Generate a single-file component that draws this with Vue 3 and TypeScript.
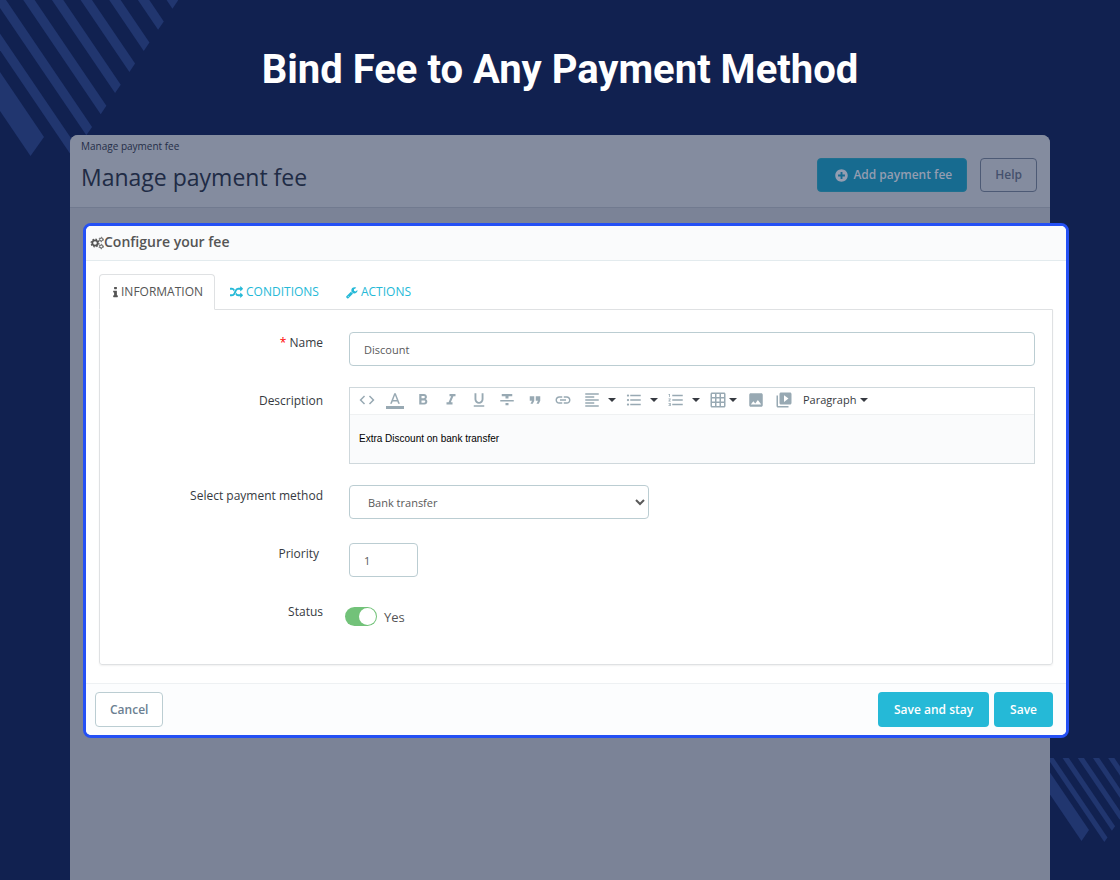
<script setup lang="ts">
import { ref } from 'vue'

interface Tool {
  name: string
  path: string
  menu?: boolean
  tight?: boolean
}

interface Tab {
  id: string
  label: string
  path: string
  box: string
  width: number
}

const tools: Tool[] = [
  { name: 'Source code', path: 'M9.4 16.6L4.8 12l4.6-4.6L8 6l-6 6 6 6 1.4-1.4zm5.2 0l4.6-4.6-4.6-4.6L16 6l6 6-6 6-1.4-1.4z' },
  { name: 'Text color', path: 'M0 20h24v4H0zM11 3L5.5 17h2.25l1.12-3h6.25l1.12 3h2.25L13 3h-2zm-1.38 9L12 5.67 14.38 12H9.62z' },
  { name: 'Bold', path: 'M15.6 10.79c.97-.67 1.65-1.77 1.65-2.79 0-2.26-1.75-4-4-4H7v14h7.04c2.09 0 3.71-1.7 3.71-3.79 0-1.52-.86-2.82-2.15-3.42zM10 6.5h3c.83 0 1.5.67 1.5 1.5s-.67 1.5-1.5 1.5h-3v-3zm3.5 9H10v-3h3.5c.83 0 1.5.67 1.5 1.5s-.67 1.5-1.5 1.5z' },
  { name: 'Italic', path: 'M10 4v3h2.21l-3.42 8H6v3h8v-3h-2.21l3.42-8H18V4z' },
  { name: 'Underline', path: 'M12 17c3.31 0 6-2.69 6-6V3h-2.5v8c0 1.93-1.57 3.5-3.5 3.5S8.5 12.93 8.5 11V3H6v8c0 3.31 2.69 6 6 6zm-7 2v2h14v-2H5z' },
  { name: 'Strikethrough', path: 'M10 19h4v-3h-4v3zM5 4v3h5v3h4V7h5V4H5zM3 14h18v-2H3v2z' },
  { name: 'Blockquote', path: 'M6 17h3l2-4V7H5v6h3zm8 0h3l2-4V7h-6v6h3z' },
  { name: 'Link', path: 'M3.9 12c0-1.71 1.39-3.1 3.1-3.1h4V7H7c-2.76 0-5 2.24-5 5s2.24 5 5 5h4v-1.9H7c-1.71 0-3.1-1.39-3.1-3.1zM8 13h8v-2H8v2zm9-6h-4v1.9h4c1.71 0 3.1 1.39 3.1 3.1s-1.39 3.1-3.1 3.1h-4V17h4c2.76 0 5-2.24 5-5s-2.24-5-5-5z' },
  { name: 'Align', menu: true, path: 'M15 15H3v2h12v-2zm0-8H3v2h12V7zM3 13h18v-2H3v2zm0 8h18v-2H3v2zM3 3v2h18V3H3z' },
  { name: 'Bullet list', menu: true, path: 'M4 10.5c-.83 0-1.5.67-1.5 1.5s.67 1.5 1.5 1.5 1.5-.67 1.5-1.5-.67-1.5-1.5-1.5zm0-6c-.83 0-1.5.67-1.5 1.5S3.17 7.5 4 7.5 5.5 6.83 5.5 6 4.83 4.5 4 4.5zm0 12c-.83 0-1.5.68-1.5 1.5s.68 1.5 1.5 1.5 1.5-.68 1.5-1.5-.67-1.5-1.5-1.5zM7 19h14v-2H7v2zm0-6h14v-2H7v2zm0-8v2h14V5H7z' },
  { name: 'Numbered list', menu: true, path: 'M2 17h2v.5H3v1h1v.5H2v1h3v-4H2v1zm1-9h1V4H2v1h1v3zm-1 3h1.8L2 13.1v.9h3v-1H3.2L5 10.9V10H2v1zm5-6v2h14V5H7zm0 14h14v-2H7v2zm0-6h14v-2H7v2z' },
  { name: 'Table', menu: true, tight: true, path: 'M20 2H4c-1.1 0-2 .9-2 2v16c0 1.1.9 2 2 2h16c1.1 0 2-.9 2-2V4c0-1.1-.9-2-2-2zM8 20H4v-4h4v4zm0-6H4v-4h4v4zm0-6H4V4h4v4zm6 12h-4v-4h4v4zm0-6h-4v-4h4v4zm0-6h-4V4h4v4zm6 12h-4v-4h4v4zm0-6h-4v-4h4v4zm0-6h-4V4h4v4z' },
  { name: 'Image', path: 'M21 19V5c0-1.1-.9-2-2-2H5c-1.1 0-2 .9-2 2v14c0 1.1.9 2 2 2h14c1.1 0 2-.9 2-2zM8.5 13.5l2.5 3.01L14.5 12l4.5 6H5l3.5-4.5z' },
  { name: 'Video', path: 'M4 6H2v14c0 1.1.9 2 2 2h14v-2H4V6zm16-4H8c-1.1 0-2 .9-2 2v12c0 1.1.9 2 2 2h12c1.1 0 2-.9 2-2V4c0-1.1-.9-2-2-2zm-8 12.5v-9l6 4.5-6 4.5z' },
]

const tabs: Tab[] = [
  {
    id: 'information', label: 'INFORMATION', box: '576 0 640 1792', width: 5,
    path: 'M1216 1344v128q0 26-19 45t-45 19h-512q-26 0-45-19t-19-45v-128q0-26 19-45t45-19h64v-384h-64q-26 0-45-19t-19-45v-128q0-26 19-45t45-19h384q26 0 45 19t19 45v576h64q26 0 45 19t19 45zm-128-1152v192q0 26-19 45t-45 19h-256q-26 0-45-19t-19-45v-192q0-26 19-45t45-19h256q26 0 45 19t19 45z',
  },
  {
    id: 'conditions', label: 'CONDITIONS', box: '0 0 1792 1792', width: 13,
    path: 'M666 481q-60 92-137 273-22-45-37-72.5t-40.5-63.5-51-56.5-63-35-81.5-14.5h-224q-14 0-23-9t-9-23v-192q0-14 9-23t23-9h224q250 0 410 225zm1126 799q0 14-9 23l-320 320q-9 9-23 9-13 0-22.5-9.5t-9.5-22.5v-192q-32 0-85 .5t-81 1-73-1-71-5-64-10.5-63-18.5-58-28.5-59-40-55-53.5-56-69.5q59-93 136-273 22 45 37 72.5t40.5 63.5 51 56.5 63 35 81.5 14.5h256v-192q0-14 9-23t23-9q12 0 24 10l319 319q9 9 9 23zm0-896q0 14-9 23l-320 320q-9 9-23 9-13 0-22.5-9.5t-9.5-22.5v-192h-256q-48 0-87 15t-69 45-51 61.5-45 77.5q-32 62-78 171-29 66-49.5 111t-54 105-64 100-74 83-90 68.5-106.5 42-128 16.5h-224q-14 0-23-9t-9-23v-192q0-14 9-23t23-9h224q48 0 87-15t69-45 51-61.5 45-77.5q32-62 78-171 29-66 49.5-111t54-105 64-100 74-83 90-68.5 106.5-42 128-16.5h256v-192q0-14 9-23t23-9q12 0 24 10l319 319q9 9 9 23z',
  },
  {
    id: 'actions', label: 'ACTIONS', box: '64 0 1728 1792', width: 12,
    path: 'M448 1472q0-26-19-45t-45-19-45 19-19 45 19 45 45 19 45-19 19-45zm644-420l-682 682q-37 37-90 37-52 0-91-37l-106-108q-38-36-38-90 0-53 38-91l681-681q39 98 114.5 173.5t173.5 114.500zm634-435q0 39-23 106-47 134-164.500 217.500t-258.500 83.500q-185 0-316.500-131.500t-131.500-316.500 131.500-316.500 316.500-131.500q58 0 121.500 16.500t107.500 46.500q16 11 16 28t-16 28l-293 169v224l193 107q5-3 79-48.500t135.500-81 70.500-35.500q15 0 23.500 10t8.500 25z',
  },
]

const activeTab = ref('information')
const name = ref('Discount')
const description = ref('Extra Discount on bank transfer')
const method = ref('Bank transfer')
const priority = ref('1')
const enabled = ref(true)

// Diagonal bars running up and to the left from their pointed ends.
function bar(tipX: number, tipY: number, endX: number, endY: number): string {
  const run = 200
  const rise = 295
  return `${tipX},${tipY} ${endX},${endY} ${endX - run},${endY - rise} ${tipX - run},${tipY - rise}`
}

const topBars: string[] = [
  bar(44, 137, 30.5, 156),
  ...Array.from({ length: 8 }, (_, i) => bar(77.7 + 14.35 * i, 148 - 21.1 * i, 72 + 14.35 * i, 156.4 - 21.1 * i)),
]
const bottomBars: string[] = [
  bar(39, 72, 31.5, 83),
  ...Array.from({ length: 5 }, (_, i) => bar(57.5 + 7.6 * i, 79.5 - 11.2 * i, 54.3 + 7.6 * i, 84 - 11.2 * i)),
]
</script>

<template>
  <main class="page">
    <svg class="bars bars-top" width="190" height="170" viewBox="0 0 190 170" aria-hidden="true">
      <polygon v-for="points in topBars" :key="points" :points="points" />
    </svg>
    <svg class="bars bars-bottom" width="70" height="122" viewBox="0 0 70 122" aria-hidden="true">
      <polygon v-for="points in bottomBars" :key="points" :points="points" />
    </svg>

    <h1 class="headline">Bind Fee to Any Payment Method</h1>

    <section class="admin">
      <header class="admin-head">
        <div>
          <p class="crumb">Manage payment fee</p>
          <h2 class="admin-title">Manage payment fee</h2>
        </div>
        <div class="admin-actions">
          <button type="button" class="btn btn-add">
            <svg width="15" height="15" viewBox="0 0 24 24" aria-hidden="true">
              <path d="M12 2C6.480 2 2 6.480 2 12s4.480 10 10 10 10-4.480 10-10S17.520 2 12 2zm5.500 11.500h-4v4h-3v-4h-4v-3h4v-4h3v4h4v3z" />
            </svg>
            Add payment fee
          </button>
          <button type="button" class="btn btn-help">Help</button>
        </div>
      </header>

      <form class="dialog" @submit.prevent>
        <header class="dialog-head">
          <svg class="cogs" width="14" height="14" viewBox="0 0 14 14" aria-hidden="true">
            <circle cx="5" cy="7" r="2.700" stroke-width="1.800" />
            <circle cx="5" cy="7" r="3.900" stroke-width="1.200" stroke-dasharray="1.600 1.463" />
            <circle cx="11.200" cy="3.500" r="1.500" stroke-width="1" />
            <circle cx="11.200" cy="3.500" r="2.200" stroke-width=".900" stroke-dasharray="1.200 1.104" />
            <circle cx="11.200" cy="10.500" r="1.500" stroke-width="1" />
            <circle cx="11.200" cy="10.500" r="2.200" stroke-width=".900" stroke-dasharray="1.200 1.104" />
          </svg>
          <h3 class="dialog-title">Configure your fee</h3>
        </header>

        <div class="dialog-body">
          <div class="tabs" role="tablist">
            <button
              v-for="tab in tabs"
              :key="tab.id"
              type="button"
              role="tab"
              class="tab"
              :class="{ active: tab.id === activeTab }"
              :aria-selected="tab.id === activeTab"
              @click="activeTab = tab.id"
            >
              <svg :width="tab.width" height="13" :viewBox="tab.box" aria-hidden="true"><path :d="tab.path" /></svg>
              {{ tab.label }}
            </button>
          </div>

          <div class="pane" role="tabpanel">
            <div class="row">
              <label class="label" for="fee-name"><span class="required">*</span> Name</label>
              <input id="fee-name" v-model="name" class="field" type="text">
            </div>

            <div class="row">
              <label class="label lowered" for="fee-description">Description</label>
              <div class="editor">
                <div class="toolbar">
                  <button
                    v-for="tool in tools"
                    :key="tool.name"
                    type="button"
                    class="tool"
                    :class="{ menu: tool.menu, tight: tool.tight }"
                    :aria-label="tool.name"
                  >
                    <svg width="18" height="18" viewBox="0 0 24 24" aria-hidden="true"><path :d="tool.path" /></svg>
                    <span v-if="tool.menu" class="caret"></span>
                  </button>
                  <button type="button" class="tool format">Paragraph <span class="caret"></span></button>
                </div>
                <textarea id="fee-description" v-model="description" class="editor-text" rows="1"></textarea>
              </div>
            </div>

            <div class="row">
              <label class="label" for="fee-method">Select payment method</label>
              <select id="fee-method" v-model="method" class="field select">
                <option>Bank transfer</option>
              </select>
            </div>

            <div class="row spaced">
              <label class="label inset" for="fee-priority">Priority</label>
              <input id="fee-priority" v-model="priority" class="field short" type="text">
            </div>

            <div class="row spaced">
              <label class="label" for="fee-status">Status</label>
              <div class="status">
                <input id="fee-status" v-model="enabled" class="switch" type="checkbox">
                <span>{{ enabled ? 'Yes' : 'No' }}</span>
              </div>
            </div>
          </div>
        </div>

        <footer class="dialog-foot">
          <button type="button" class="btn btn-cancel">Cancel</button>
          <div class="saves">
            <button type="submit" class="btn btn-save">Save and stay</button>
            <button type="submit" class="btn btn-save">Save</button>
          </div>
        </footer>
      </form>
    </section>
  </main>
</template>

<style>
body {
  margin: 0;
  background: #112150;
}
</style>

<style scoped>
.page {
  position: relative;
  display: flex;
  flex-direction: column;
  box-sizing: border-box;
  min-height: 100vh;
  overflow: hidden;
  background: #112150;
  font-family: "Open Sans", sans-serif;
  font-size: 12px;
  color: #363a41;
}

.bars {
  position: absolute;
  fill: #21366f;
}

.bars-top {
  top: 0;
  left: 0;
}

.bars-bottom {
  right: 0;
  bottom: 0;
}

.headline {
  position: relative;
  margin: 0;
  padding: 46px 0 41px;
  text-align: center;
  font: 700 40px/48px Roboto, sans-serif;
  color: #fff;
}

.admin {
  position: relative;
  flex: 1;
  margin: 0 70px;
  border-radius: 8px 8px 0 0;
  background: #7b8397;
}

.admin-head {
  display: flex;
  justify-content: space-between;
  padding: 3px 13px 14px 11px;
  border-bottom: 1px solid #717a8f;
  border-radius: 8px 8px 0 0;
  background: #848c9f;
}

.crumb {
  margin: 0;
  font-size: 10px;
  line-height: 16px;
  color: #242e48;
}

.admin-title {
  margin: 7px 0 0;
  font-size: 23px;
  line-height: 32px;
  font-weight: 400;
  color: #202b45;
}

.admin-actions {
  display: flex;
  gap: 13px;
  padding-top: 20px;
}

.btn {
  display: flex;
  align-items: center;
  justify-content: center;
  box-sizing: border-box;
  height: 35px;
  padding: 0 14px;
  border: 1px solid transparent;
  border-radius: 4px;
  font: 600 12px/18px "Open Sans", sans-serif;
  white-space: nowrap;
}

.admin-actions .btn {
  height: 34px;
}

.btn-add {
  gap: 4px;
  padding-left: 16px;
  background: #176b90;
  border-color: #20708f;
  color: #949db1;
}

.btn-add svg {
  fill: #949db1;
}

.btn-help {
  background: transparent;
  border-color: #4d5a75;
  color: #44516d;
}

.dialog {
  margin: 15px -19px 0 13px;
  border: 3px solid #2450f5;
  border-radius: 8px;
  background: #fff;
  overflow: hidden;
}

.dialog-head {
  display: flex;
  align-items: center;
  height: 34px;
  padding: 0 4px;
  border-bottom: 1px solid #e3ebee;
  background: #fafbfc;
}

.cogs {
  fill: none;
  stroke: #555;
}

.dialog-title {
  margin: 0 0 3px;
  font-size: 14px;
  line-height: 20px;
  font-weight: 600;
  color: #555;
}

.dialog-body {
  padding: 13px 13px 18px;
}

.tabs {
  display: flex;
}

.tab {
  display: flex;
  align-items: center;
  gap: 3px;
  box-sizing: border-box;
  height: 36px;
  padding: 0 11px 0 14px;
  border: 1px solid transparent;
  border-radius: 4px 4px 0 0;
  background: none;
  font: 400 12px/18px "Open Sans", sans-serif;
  color: #25b9d7;
}

.tab svg {
  fill: currentColor;
}

.tab.active {
  z-index: 1;
  padding-left: 13px;
  border: 1px solid #dfe1e3;
  border-bottom-color: #fff;
  background: #fff;
  color: #555;
}

.pane {
  display: flex;
  flex-direction: column;
  gap: 21px;
  margin-top: -1px;
  padding: 22px 17px 35px 0;
  border: 1px solid #dfe1e3;
  border-radius: 0 0 3px 3px;
  box-shadow: 0 1px 2px #0000000f;
}

.row {
  display: grid;
  grid-template-columns: 223px minmax(0, 1fr);
  column-gap: 26px;
  align-items: start;
}

.row.spaced {
  margin-top: 3px;
}

.label {
  padding-top: 2px;
  text-align: right;
  line-height: 18px;
}

.label.lowered {
  padding-top: 5px;
}

.label.inset {
  padding-right: 4px;
}

.required {
  color: #f00;
}

.field {
  box-sizing: border-box;
  width: 100%;
  height: 34px;
  padding: 0 14px;
  border: 1px solid #bbcdd2;
  border-radius: 4px;
  outline: 0;
  background: #fff;
  font: 400 11px/16px "Open Sans", sans-serif;
  color: #5a5a5a;
}

.field.select {
  width: 300px;
}

.field.short {
  width: 69px;
}

.editor {
  box-sizing: border-box;
  border: 1px solid #cfd8dc;
  background: #fafbfc;
}

.toolbar {
  display: flex;
  height: 26px;
  padding-left: 3px;
  border-bottom: 1px solid #eff1f2;
  background: #fff;
}

.tool {
  display: flex;
  align-items: center;
  box-sizing: border-box;
  width: 28px;
  height: 24px;
  padding: 0 5px;
  border: 0;
  background: none;
  font: 400 11px/16px "Open Sans", sans-serif;
  color: #363a41;
}

.tool svg {
  flex: none;
  fill: #98a9b3;
}

.tool.menu {
  gap: 7px;
  width: 42px;
  padding-left: 6px;
}

.tool.tight {
  gap: 2px;
  width: 39px;
}

.tool.format {
  gap: 4px;
  width: auto;
}

.caret {
  flex: none;
  border: 4px solid transparent;
  border-top-color: #363a41;
  border-bottom: 0;
}

.editor-text {
  display: block;
  box-sizing: border-box;
  width: 100%;
  height: 48px;
  padding: 17px 9px 0;
  border: 0;
  outline: 0;
  resize: none;
  background: transparent;
  font: 400 10px/14px "Liberation Sans", Arial, sans-serif;
  color: #000;
}

.status {
  display: flex;
  align-items: center;
  gap: 7px;
  margin: 3px 0 0 -4px;
  font-size: 13px;
  color: #555;
}

.switch {
  appearance: none;
  display: flex;
  justify-content: flex-start;
  box-sizing: border-box;
  width: 32px;
  height: 19px;
  margin: 3px 0;
  padding: 1px;
  border-radius: 10px;
  background: #b3c7cd;
}

.switch::before {
  content: "";
  width: 17px;
  height: 17px;
  border-radius: 50%;
  background: #fff;
}

.switch:checked {
  justify-content: flex-end;
  background: #72c279;
}

.dialog-foot {
  display: flex;
  justify-content: space-between;
  padding: 8px 13px 8px 9px;
  border-top: 1px solid #eef1f3;
  background: #fcfdfe;
}

.btn-cancel {
  background: #fff;
  border-color: #bbcdd2;
  color: #6c7f92;
}

.saves {
  display: flex;
  gap: 5px;
}

.btn-save {
  padding: 0 15px;
  background: #25b9d7;
  color: #fff;
}
</style>
